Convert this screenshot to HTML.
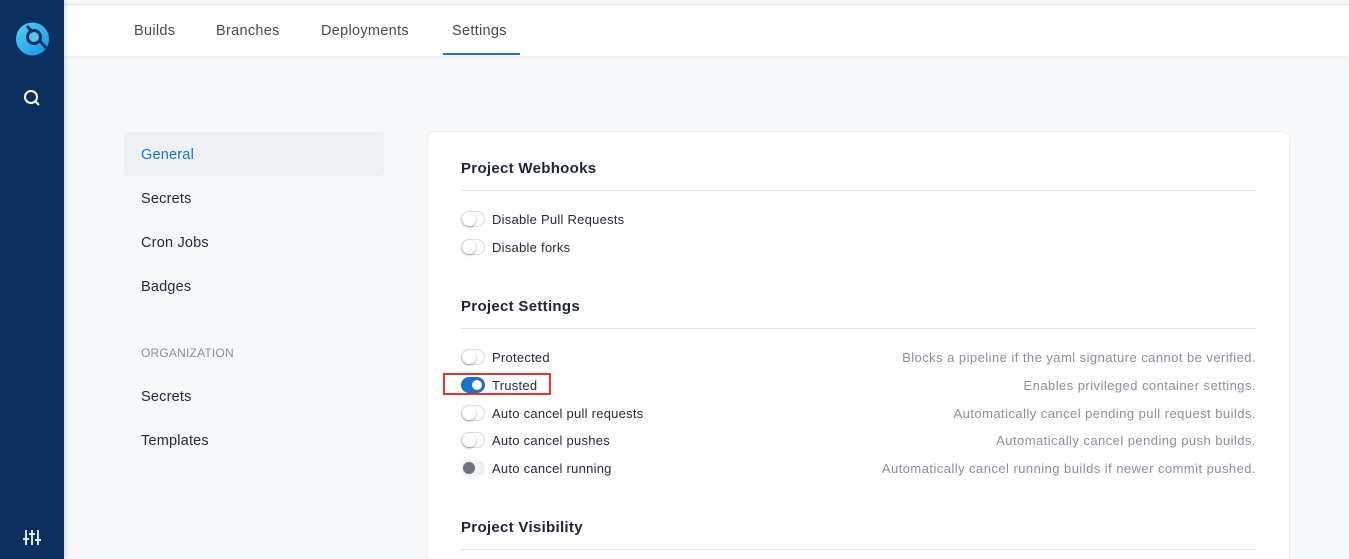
<!DOCTYPE html>
<html><head><meta charset="utf-8"><style>
*{box-sizing:border-box;margin:0;padding:0}
html,body{width:1349px;height:559px;overflow:hidden}
body{background:#f7f8fa;font-family:"Liberation Sans",sans-serif;position:relative;color:#1f2937}
.side{position:absolute;left:0;top:0;width:64px;height:559px;background:#0b2f5f;box-shadow:2px 0 4px rgba(0,0,0,.12);z-index:2}
.top{position:absolute;left:64px;top:4px;right:0;height:52px;background:#fff;border-top:1px solid #e4e6ea;box-shadow:0 2px 4px rgba(0,0,0,.04)}
.top span{position:absolute;top:18px;font-size:14.5px;color:#444b56;letter-spacing:.3px}
.tab{position:absolute;left:443px;top:53px;width:77px;height:2px;background:#1873d3}
.nav{position:absolute;left:124px;width:260px;height:44px;line-height:46px;padding-left:17px;font-size:14.5px;color:#1f2937;border-radius:4px;letter-spacing:.2px}
.card{position:absolute;left:427px;top:131px;width:863px;height:440px;background:#fff;border:1px solid #eceef1;border-radius:8px}
h3{position:absolute;left:461px;font-size:15px;font-weight:bold;color:#1f2434;letter-spacing:.3px}
.hr{position:absolute;left:461px;width:795px;height:1px;background:#e1e3e7}
.row{position:absolute;left:461px;width:795px;height:20px;font-size:13px;color:#272c3a;letter-spacing:.25px}
.row .lbl{position:absolute;left:31px;top:3px}
.row .d{position:absolute;right:0;top:3px;color:#8a909b;letter-spacing:.45px}
.tg{position:absolute;left:0;top:2px;width:24px;height:16px;border-radius:8px;background:#fff;border:1px solid #dcdde2}
.tg:after{content:"";position:absolute;left:0;top:0;width:14px;height:14px;border-radius:7px;background:#fff;box-shadow:0 1px 2px rgba(0,0,0,.35)}
.tg.on{background:#1873d3;border-color:#1873d3}
.tg.on:after{left:10px;top:2px;width:10px;height:10px;box-shadow:none;border-radius:5px}
.tg.gr{background:#f0f1f3;border-color:#f0f1f3}
.tg.gr:after{background:#6d7180;box-shadow:none;left:1px;top:1px;width:12px;height:12px}
</style></head><body>
<div class="side">
<svg width="64" height="559" style="position:absolute;left:0;top:0">
<defs><linearGradient id="g" x1="0" y1="0" x2="1" y2="1"><stop offset="0" stop-color="#4fd3f0"/><stop offset="1" stop-color="#1b8ff0"/></linearGradient></defs>
<circle cx="32.5" cy="39" r="16.5" fill="url(#g)"/>
<line x1="27" y1="26" x2="46" y2="48" stroke="#0b2f5f" stroke-width="3"/>
<circle cx="34" cy="37" r="6.5" fill="#4fc7ef" stroke="#0b2f5f" stroke-width="3"/>
<circle cx="31" cy="97" r="6" fill="none" stroke="#fff" stroke-width="2"/>
<line x1="35.5" y1="101.5" x2="39" y2="105" stroke="#fff" stroke-width="2"/>
<g stroke="#dfe6ee" stroke-width="2">
<line x1="26" y1="530" x2="26" y2="545"/><line x1="32" y1="530" x2="32" y2="545"/><line x1="38" y1="530" x2="38" y2="545"/>
<line x1="23" y1="539" x2="29" y2="539"/><line x1="29" y1="534" x2="35" y2="534"/><line x1="35" y1="540" x2="41" y2="540"/></g>
</svg></div>
<div class="top">
<span style="left:70px">Builds</span><span style="left:152px">Branches</span><span style="left:257px">Deployments</span><span style="left:388px">Settings</span>
</div>
<div class="tab"></div>
<div class="nav" style="top:132px;background:#eef0f3;color:#1873d3">General</div>
<div class="nav" style="top:176px">Secrets</div>
<div class="nav" style="top:220px">Cron Jobs</div>
<div class="nav" style="top:264px">Badges</div>
<div class="nav" style="top:330px;font-size:12px;color:#8a909b">ORGANIZATION</div>
<div class="nav" style="top:374px">Secrets</div>
<div class="nav" style="top:418px">Templates</div>
<div class="card"></div>
<h3 style="top:160px">Project Webhooks</h3><div class="hr" style="top:190px"></div>
<div class="row" style="top:209px"><div class="tg"></div><span class="lbl">Disable Pull Requests</span></div>
<div class="row" style="top:237px"><div class="tg"></div><span class="lbl">Disable forks</span></div>
<h3 style="top:298px">Project Settings</h3><div class="hr" style="top:328px"></div>
<div class="row" style="top:347px"><div class="tg"></div><span class="lbl">Protected</span><span class="d">Blocks a pipeline if the yaml signature cannot be verified.</span></div>
<div class="row" style="top:375px"><div class="tg on"></div><span class="lbl">Trusted</span><span class="d">Enables privileged container settings.</span></div>
<div style="position:absolute;left:443px;top:373px;width:108px;height:22px;border:2px solid #e8322f"></div>
<div class="row" style="top:403px"><div class="tg"></div><span class="lbl">Auto cancel pull requests</span><span class="d">Automatically cancel pending pull request builds.</span></div>
<div class="row" style="top:430px"><div class="tg"></div><span class="lbl">Auto cancel pushes</span><span class="d">Automatically cancel pending push builds.</span></div>
<div class="row" style="top:458px"><div class="tg gr"></div><span class="lbl">Auto cancel running</span><span class="d">Automatically cancel running builds if newer commit pushed.</span></div>
<h3 style="top:519px">Project Visibility</h3><div class="hr" style="top:549px"></div>
</body></html>
